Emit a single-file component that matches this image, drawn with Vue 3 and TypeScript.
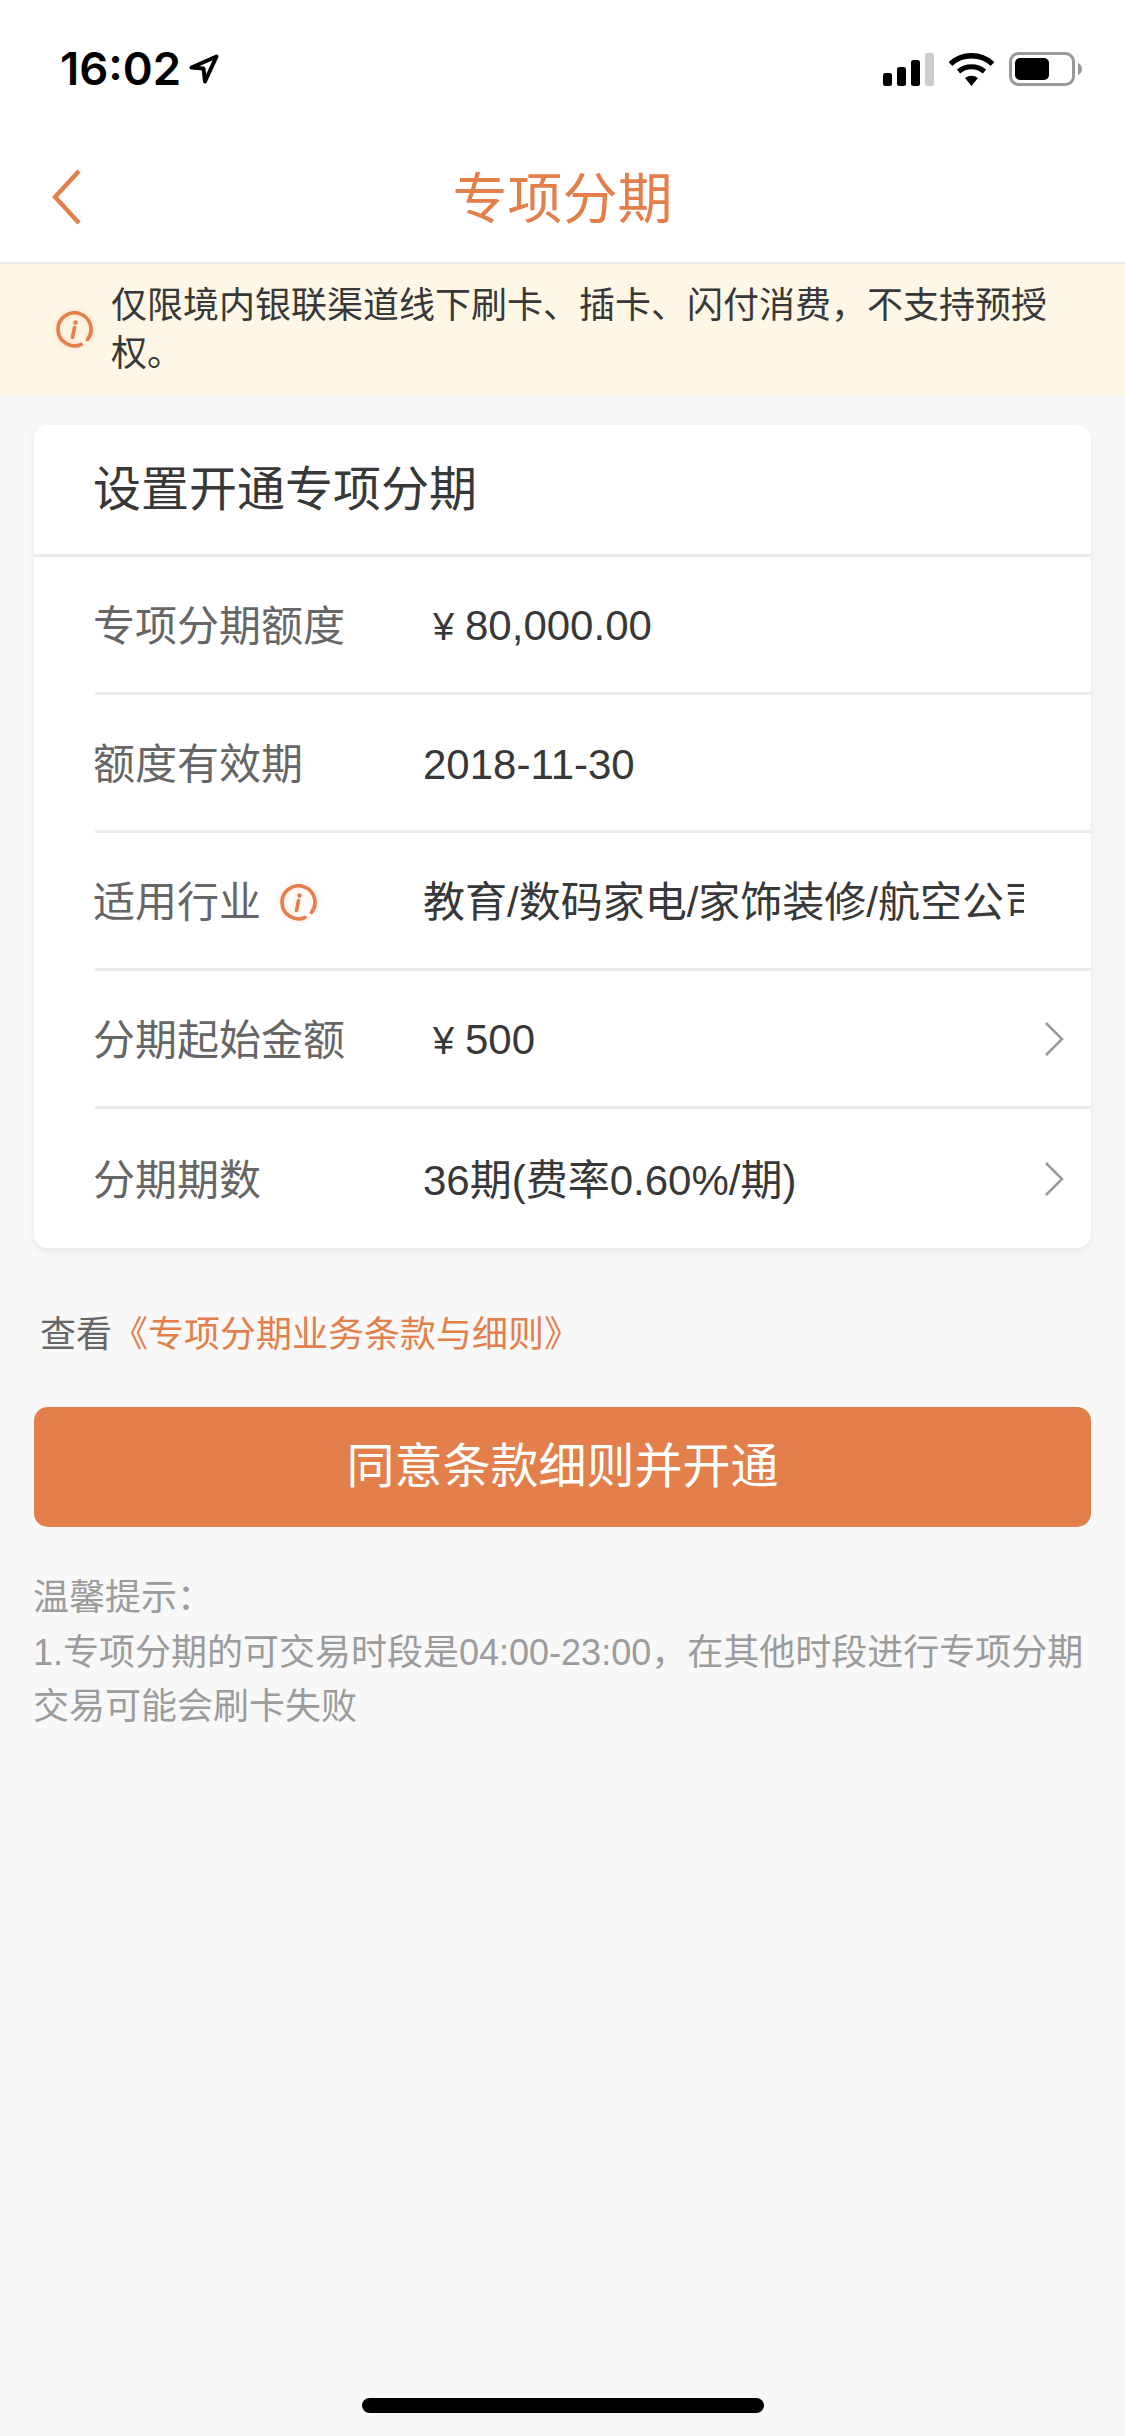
<script setup lang="ts">
interface Row {
  label: string
  value: string
  yen?: boolean
  info?: boolean
  arrow?: boolean
}

const rows: Row[] = [
  { label: '专项分期额度', value: '80,000.00', yen: true },
  { label: '额度有效期', value: '2018-11-30' },
  { label: '适用行业', value: '教育/数码家电/家饰装修/航空公司', info: true },
  { label: '分期起始金额', value: '500', yen: true, arrow: true },
  { label: '分期期数', value: '36期(费率0.60%/期)', arrow: true },
]
</script>

<template>
  <div class="page">
    <div class="status">
      <div class="status__left">
        <span class="status__time">16:02</span>
        <svg class="status__arrow" width="30" height="30" viewBox="0 0 30 30">
          <path d="M2.5 13.5 27.5 2.5 16 27.5 14.5 14.5Z" fill="none" stroke="#000" stroke-width="4" stroke-linejoin="round" />
        </svg>
      </div>
      <div class="status__right">
        <svg width="51" height="33" viewBox="0 0 51 33">
          <rect x="0" y="20" width="9" height="13" rx="2.5" fill="#000" />
          <rect x="14" y="14" width="9" height="19" rx="2.5" fill="#000" />
          <rect x="28" y="7" width="9" height="26" rx="2.5" fill="#000" />
          <rect x="42" y="0" width="9" height="33" rx="2.5" fill="#ccc" />
        </svg>
        <svg width="45" height="33" viewBox="0 0 45 33">
          <path d="M1.5 11C13 0 32 0 43.5 11" fill="none" stroke="#000" stroke-width="5.5" />
          <path d="M9.5 18.5C17 12 28 12 35.5 18.5" fill="none" stroke="#000" stroke-width="5" />
          <path d="M16 25Q22.5 20.5 29 25L22.5 33Z" fill="#000" />
        </svg>
        <svg width="73" height="34" viewBox="0 0 73 34">
          <rect x="1.5" y="1.5" width="63" height="31" rx="8" fill="none" stroke="#999" stroke-width="3" />
          <rect x="6" y="6" width="34" height="22" rx="5" fill="#000" />
          <path d="M69 11C71.5 12 73 14 73 17S71.5 22 69 23Z" fill="#999" />
        </svg>
      </div>
    </div>

    <div class="nav">
      <svg class="nav__back" width="30" height="56" viewBox="0 0 30 56">
        <path d="M27 2 3 28 27 54" fill="none" stroke="#e27f4a" stroke-width="4.5" />
      </svg>
      <div class="nav__title">专项分期</div>
      <div></div>
    </div>

    <div class="notice">
      <svg class="info" width="38" height="38" viewBox="0 0 38 38">
        <path d="M26 33.5A16.5 16.5 0 1 1 32.5 28.5" fill="none" stroke="#e27f4a" stroke-width="3.6" stroke-linecap="round" />
        <circle cx="20.5" cy="11.5" r="2.2" fill="#e27f4a" />
        <path d="M19.5 16.5 17.5 26.5" fill="none" stroke="#e27f4a" stroke-width="3.6" stroke-linecap="round" />
      </svg>
      <div class="notice__text">仅限境内银联渠道线下刷卡、插卡、闪付消费，不支持预授权。</div>
    </div>

    <div class="card">
      <div class="card__head">设置开通专项分期</div>
      <div v-for="row in rows" :key="row.label" class="row">
        <div class="row__label">
          <span>{{ row.label }}</span>
          <svg v-if="row.info" class="info" width="38" height="38" viewBox="0 0 38 38">
            <path d="M26 33.5A16.5 16.5 0 1 1 32.5 28.5" fill="none" stroke="#e27f4a" stroke-width="3.6" stroke-linecap="round" />
            <circle cx="20.5" cy="11.5" r="2.2" fill="#e27f4a" />
            <path d="M19.5 16.5 17.5 26.5" fill="none" stroke="#e27f4a" stroke-width="3.6" stroke-linecap="round" />
          </svg>
        </div>
        <div class="row__value"><span v-if="row.yen" class="row__yen">¥</span>{{ row.value }}</div>
        <svg v-if="row.arrow" class="row__arrow" width="20" height="36" viewBox="0 0 20 36">
          <path d="M2 2 18 18 2 34" fill="none" stroke="#999" stroke-width="2.5" />
        </svg>
      </div>
    </div>

    <div class="terms">查看<span class="terms__link">《专项分期业务条款与细则》</span></div>

    <div class="submit">同意条款细则并开通</div>

    <div class="tips">
      <div>温馨提示：</div>
      <div>1.专项分期的可交易时段是04:00-23:00，在其他时段进行专项分期交易可能会刷卡失败</div>
    </div>

    <div class="home"></div>
  </div>
</template>

<style>
html,
body {
  margin: 0;
  background: #f8f8f8;
}
</style>

<style scoped>
.page {
  width: 1125px;
  height: 2436px;
  display: flex;
  flex-direction: column;
  background: #f8f8f8;
  font-family: 'Liberation Sans', 'Noto Sans CJK SC', sans-serif;
  overflow: hidden;
}

/* status bar */
.status {
  height: 132px;
  flex-shrink: 0;
  box-sizing: border-box;
  padding: 6px 43px 0 60px;
  display: flex;
  align-items: center;
  justify-content: space-between;
  background: #fff;
}

.status__left {
  display: flex;
  align-items: center;
  gap: 8px;
}

.status__time {
  font-family: Inter, sans-serif;
  font-size: 45.5px;
  font-weight: 600;
  line-height: 50px;
  color: #000;
}

.status__right {
  display: flex;
  align-items: center;
  gap: 15px;
}

.status__right svg,
.status__arrow {
  display: block;
}

/* nav */
.nav {
  height: 132px;
  flex-shrink: 0;
  box-sizing: border-box;
  padding: 0 52px;
  display: grid;
  grid-template-columns: 1fr auto 1fr;
  align-items: center;
  background: #fff;
  border-bottom: 2px solid #e9e9e9;
}

.nav__title {
  padding-top: 4px;
  font-size: 55px;
  line-height: 70px;
  color: #e27f4a;
}

/* notice */
.notice {
  height: 132px;
  flex-shrink: 0;
  box-sizing: border-box;
  padding: 0 60px 0 55px;
  display: flex;
  align-items: center;
  gap: 18px;
  background: #fef7e6;
}

.notice__text {
  font-size: 36px;
  line-height: 48px;
  color: #383838;
}

.info {
  flex-shrink: 0;
  display: block;
  filter: drop-shadow(0 0 3px rgba(226, 127, 74, 0.25));
}

/* card */
.card {
  margin: 29px 34px 0;
  flex-shrink: 0;
  background: #fff;
  border-radius: 14px;
  box-shadow: 0 3px 8px rgba(0, 0, 0, 0.07);
  overflow: hidden;
}

.card__head {
  height: 129px;
  padding-left: 59px;
  display: flex;
  align-items: center;
  font-size: 48px;
  line-height: 60px;
  color: #383838;
  border-bottom: 3px solid #ececec;
}

.row {
  height: 135px;
  margin-left: 61px;
  display: flex;
  align-items: center;
  border-bottom: 3px solid #ececec;
  font-size: 42px;
  line-height: 50px;
}

.row:last-child {
  height: 139px;
  border-bottom: 0;
}

.row__label {
  width: 330px;
  margin-left: -2px;
  padding-top: 4px;
  box-sizing: border-box;
  flex-shrink: 0;
  display: flex;
  align-items: center;
  gap: 18px;
  color: #666;
}

.row__value {
  width: 601px;
  padding-top: 4px;
  box-sizing: border-box;
  flex-shrink: 0;
  white-space: nowrap;
  overflow: hidden;
  color: #383838;
}

.row__yen {
  display: inline-block;
  width: 42px;
  padding-left: 10px;
  box-sizing: border-box;
  font-size: 38px;
}

.row__arrow {
  margin-left: 20px;
  display: block;
}

/* terms */
.terms {
  margin: 60px 0 0 40px;
  flex-shrink: 0;
  font-size: 36px;
  line-height: 54px;
  color: #666;
}

.terms__link {
  color: #e27f4a;
}

/* button */
.submit {
  margin: 45px 34px 0;
  height: 120px;
  flex-shrink: 0;
  display: flex;
  align-items: center;
  justify-content: center;
  border-radius: 14px;
  background: #e27f4a;
  color: #fff;
  font-size: 48px;
  line-height: 60px;
}

/* tips */
.tips {
  margin: 44px 34px 0 33px;
  flex-shrink: 0;
  font-size: 36px;
  line-height: 54.5px;
  color: #9c9c9c;
}

/* home indicator */
.home {
  width: 402px;
  height: 15px;
  flex-shrink: 0;
  margin: auto auto 23px;
  border-radius: 8px;
  background: #000;
}
</style>
